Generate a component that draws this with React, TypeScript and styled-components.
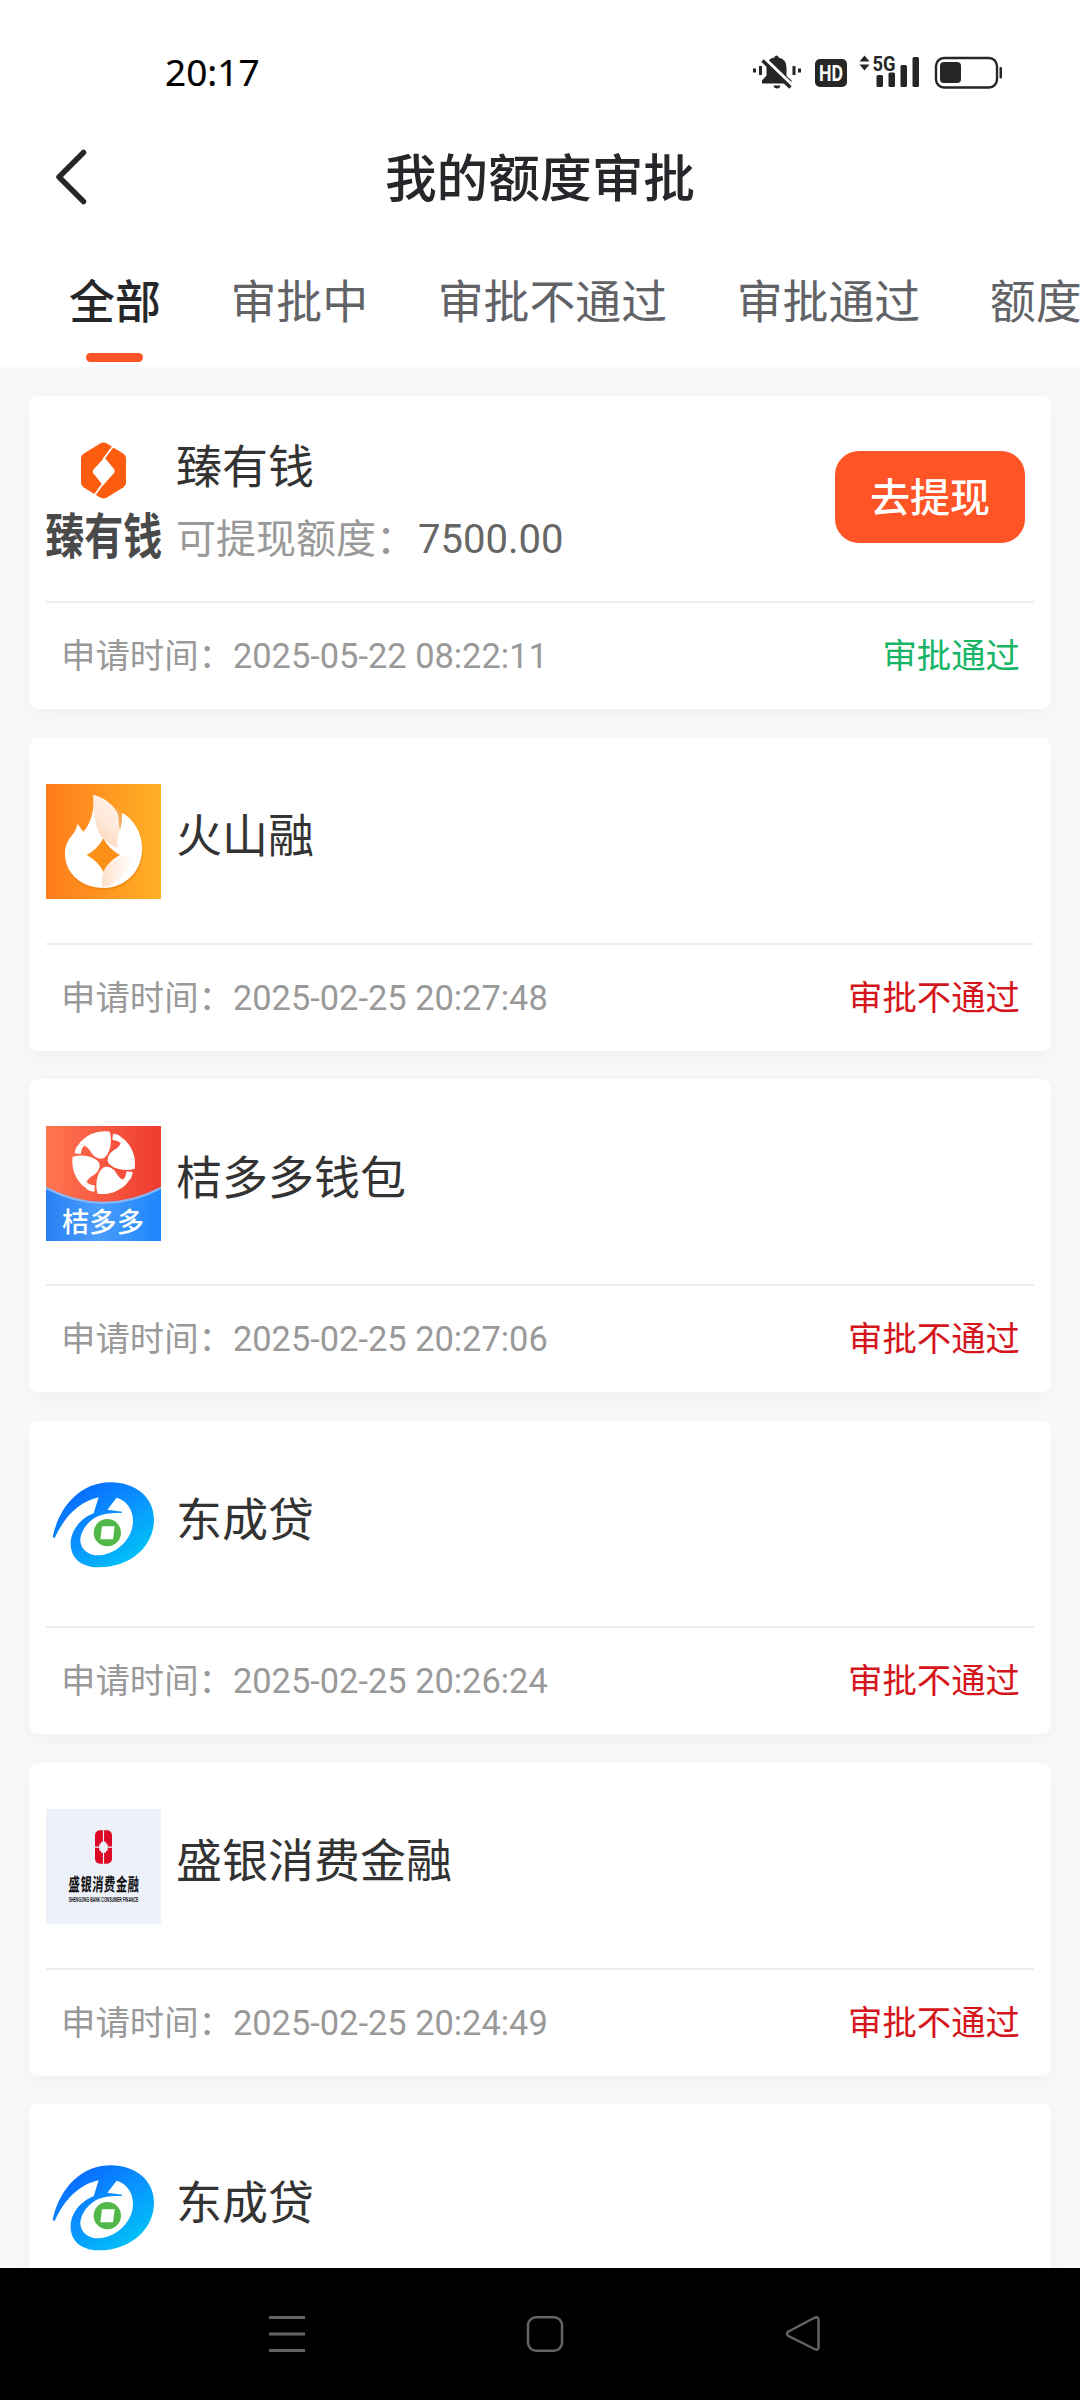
import React from 'react';
import styled, { createGlobalStyle } from 'styled-components';

const cjk = '"Noto Sans CJK SC", sans-serif';

const GlobalStyle = createGlobalStyle`
  * { box-sizing: border-box; }
  html, body { margin: 0; padding: 0; background: #f7f8fb; }
  button { font: inherit; border: 0; padding: 0; background: none; }
`;

const Screen = styled.div`
  display: flex;
  flex-direction: column;
  width: 1080px;
  height: 2400px;
  overflow: hidden;
  background: #f8f9fb;
  font-family: Roboto, ${cjk};
`;

const Header = styled.header`
  flex: none;
  display: flex;
  flex-direction: column;
  height: 367px;
  background: #fff;
`;

const StatusBar = styled.div`
  display: flex;
  justify-content: space-between;
  align-items: center;
  height: 144px;
  padding: 0 76px 0 165px;
`;

const SystemTray = styled.svg`
  display: block;
  overflow: visible;
`;

const Clock = styled.span`
  font: 400 37px/40px "Noto Sans", sans-serif;
  color: #000;
  -webkit-text-stroke: 0.2px #000;
`;

const TitleBar = styled.div`
  display: grid;
  grid-template-columns: 140px 1fr 140px;
  align-items: center;
  height: 66px;
`;

const BackButton = styled.button`
  display: flex;
  padding-left: 53px;
`;

const Title = styled.h1`
  margin: -4px 0 0;
  text-align: center;
  font: 500 51.7px/66px ${cjk};
  color: #26272a;
`;

const Tabs = styled.nav`
  display: flex;
  gap: 69.6px;
  padding-left: 69px;
  margin-top: 54px;
  overflow: hidden;
`;

const Tab = styled.button<{ $active?: boolean }>`
  flex: none;
  display: flex;
  flex-direction: column;
  align-items: center;
  gap: 21px;
  height: 103px;
  font: ${(p) => (p.$active ? 500 : 400)} 45.9px/68px ${cjk};
  color: ${(p) => (p.$active ? '#26272a' : '#626367')};
  &::after {
    content: '';
    width: 57px;
    height: 9px;
    border-radius: 5px;
    background: ${(p) => (p.$active ? '#fb5527' : 'transparent')};
  }
`;

const List = styled.main`
  flex: 1;
  min-height: 0;
  overflow: hidden;
  display: flex;
  flex-direction: column;
  gap: 28.7px;
  padding: 29px 29px 0;
`;

const Card = styled.article`
  flex: none;
  display: flex;
  flex-direction: column;
  height: 313px;
  padding: 0 17px;
  border-radius: 9px;
  background: #fff;
  box-shadow: 0 6px 22px rgba(0, 0, 0, 0.045);
`;

const Product = styled.div`
  display: flex;
  align-items: center;
  height: 207px;
  border-bottom: 2px solid #eeeeef;
`;

const Logo = styled.svg`
  flex: none;
  display: block;
  width: 115px;
  height: 115px;
  margin-top: 3px;
  overflow: visible;
`;

const Info = styled.div`
  flex: 1;
  display: flex;
  flex-direction: column;
  justify-content: center;
  padding-left: 15px;
`;

const Name = styled.div<{ $single?: boolean }>`
  font: 400 46px/70px ${cjk};
  color: #333;
  margin: ${(p) => (p.$single ? '0 0 16px' : '7px 0 0')};
`;

const Quota = styled.div`
  display: flex;
  gap: 2px;
  margin-top: 6px;
  font-size: 40px;
  line-height: 72px;
  color: #999;
`;

const Amount = styled.span`
  color: #666;
`;

const Withdraw = styled.button`
  width: 190px;
  height: 92px;
  margin-right: 9px;
  margin-bottom: 3px;
  padding-bottom: 4px;
  border-radius: 24px;
  background: #ff5426;
  color: #fff;
  font: 500 40px/84px ${cjk};
`;

const Footer = styled.div`
  display: flex;
  justify-content: space-between;
  align-items: center;
  height: 106px;
  padding: 0 14px 0 15px;
  font-size: 34.4px;
  line-height: 50px;
  color: #999;
`;

const Status = styled.span<{ $ok?: boolean }>`
  color: ${(p) => (p.$ok ? '#18b566' : '#d4161c')};
`;

const NavBar = styled.footer`
  flex: none;
  height: 132px;
  display: flex;
  justify-content: space-between;
  align-items: flex-start;
  padding: 46px 257px 0 267px;
  background: #000;
`;

const SystemIcons = () => (
  <SystemTray width="252" height="36" viewBox="752 54 252 36" fill="#262626">
    <path d="M774.5 57.5 q0-2 2-2 t2 2 q8 1.500 8 10.500 v8 l5 4.500 v3 h-29.500 v-3 l4.500-5 v-8 q0-9 8-10z" />
    <path d="M773.500 85.500h7q-.5 3-3.500 3t-3.500-3z" />
    <path d="M763.500 57.500l29 28" stroke="#fff" strokeWidth="3.500" />
    <path d="M762.500 60.500l28 27" stroke="#262626" strokeWidth="3.400" />
    <path d="M753 68.500h3v4h-3zM759 66h3v9h-3zM792.500 66h3v9h-3zM798 68.500h3v4h-3z" />
    <rect x="815" y="59" width="32" height="28" rx="5" />
    <text x="819" y="81" fontFamily="Roboto, sans-serif" fontWeight="700" fontSize="22.500" textLength="24" lengthAdjust="spacingAndGlyphs" fill="#fff">HD</text>
    <path d="M859.500 61.500l5-6 5 6zM859.500 64.500h10l-5 6z" />
    <text x="872.500" y="70.500" fontFamily="Roboto, sans-serif" fontWeight="700" fontSize="20" textLength="23" lengthAdjust="spacingAndGlyphs">5G</text>
    <rect x="876.500" y="75" width="6.500" height="12" rx="1.500" />
    <rect x="888.500" y="72.500" width="6.500" height="14.500" rx="1.500" />
    <rect x="900.500" y="65" width="6.500" height="22" rx="1.500" />
    <rect x="912.500" y="57" width="6.500" height="30" rx="1.500" />
    <rect x="936" y="58" width="61" height="29.500" rx="8" fill="none" stroke="#262626" strokeWidth="2.400" />
    <rect x="940" y="62" width="21" height="21" rx="4" />
    <rect x="999.500" y="67" width="2.500" height="11.500" rx="1" />
  </SystemTray>
);

const BackIcon = () => (
  <svg width="36" height="60" viewBox="53 147 36 60" fill="none" stroke="#26272a" strokeWidth="5.500" strokeLinecap="round" strokeLinejoin="round">
    <path d="M83.500 152.500L59 177L83.500 201.500" />
  </svg>
);

const ZhenLogo = () => (
  <Logo viewBox="0 0 115 115">
    <path d="M54.500 .3q3-1.600 6 0l17 10.500q2.500 1.600 2.500 4.500v24.400q0 2.900-2.500 4.500l-17 10.500q-3 1.600-6 0l-17-10.500q-2.500-1.600-2.500-4.500V15.300q0-2.900 2.500-4.500z" fill="#fb5c10" />
    <path d="M58.500 14.500l9.500 11.500q1.500 2 0 4l-11 12.500l-9.500-12q-1.500-2 0-4z" fill="#fff" />
    <path d="M67 3.500L57.500 16M57 40.500L48 53" stroke="#fff" strokeWidth="1.800" />
    <text transform="translate(-.8 110.500) scale(.94 1.180)" fontFamily={cjk} fontWeight="700" fontSize="41.500" fill="#4a4a4a">臻有钱</text>
  </Logo>
);

const FlameLogo = () => (
  <Logo viewBox="0 0 345 345">
    <defs>
      <linearGradient id="fbg" x1="0" x2="1"><stop offset="0" stopColor="#ff7c1a" /><stop offset="1" stopColor="#ffb026" /></linearGradient>
      <linearGradient id="fpe" x1="0.100" y1="1" x2=".6" y2="0"><stop offset="0" stopColor="#ffd3b5" /><stop offset=".6" stopColor="#ffe9db" /><stop offset="1" stopColor="#fff1e8" /></linearGradient>
      <linearGradient id="fbt" x1="0" x2="1"><stop offset="0" stopColor="#ffe0ca" /><stop offset="1" stopColor="#fff" /></linearGradient>
    </defs>
    <rect width="345" height="345" fill="url(#fbg)" />
    <path d="M60 220C65 285 115 318 172 318C240 318 285 270 290 210" fill="#e87a10" opacity=".5" />
    <path d="M142 32C148 80 130 125 112 143C108 140 104 130 94 119C90 155 57 160 57 210C57 270 110 312 172 312C238 312 288 262 288 195C288 145 260 105 228 87Q230 115 222 137C222 95 185 50 142 32Z" fill="#fff" />
    <path d="M142 32C190 45 232 85 222 137C215 155 222 175 225 196Q190 185 172 163C150 145 141 85 142 32Z" fill="url(#fpe)" />
    <path d="M228 87C262 105 288 145 288 195L222 213Q205 180 222 137Q229 112 228 87Z" fill="#fff" />
    <path d="M207 66C227 80 231 108 222 138C217 116 221 90 207 66Z" fill="#f3a65c" />
    <path d="M172 263C190 235 215 220 260 205C270 240 220 300 168 312Q166 285 172 263Z" fill="url(#fbt)" />
    <path d="M172 163Q188 195 222 213Q188 231 172 263Q156 231 122 213Q156 195 172 163Z" fill="#fb9019" />
  </Logo>
);

const JieLogo = () => (
  <Logo viewBox="0 0 345 345">
    <defs>
      <linearGradient id="jr" x1="0" x2="1"><stop offset="0" stopColor="#ff7650" /><stop offset="1" stopColor="#ee3b30" /></linearGradient>
      <linearGradient id="jb" x1="0" x2="1"><stop offset="0" stopColor="#2880f4" /><stop offset=".45" stopColor="#4a9dfb" /><stop offset="1" stopColor="#1c86fb" /></linearGradient>
    </defs>
    <rect width="345" height="345" fill="url(#jr)" />
    <path d="M0 182Q172 272 345 182V345H0Z" fill="#86b8fb" />
    <path d="M0 190Q172 278 345 190V345H0Z" fill="url(#jb)" />
    <g transform="translate(173 110)" fill="#fff">
      {[0, 90, 180, 270].map((a) => (
        <g key={a} transform={`rotate(${a})`}>
          <path d="M-74 -57C-50 -86 -15 -98 18 -93C28 -60 17 -26 2 -15C-10 -8 -26 -14 -36 -28C-44 -44 -56 -54 -74 -57Z" />
          <path d="M-87 -28C-86 -42 -80 -52 -72 -57L-56 -51C-66 -48 -66 -36 -69 -26Z" />
        </g>
      ))}
    </g>
    <text x="48" y="319" fontFamily={cjk} fontWeight="500" fontSize="82" fill="#fff" textLength="246">桔多多</text>
  </Logo>
);

const DongLogo = () => (
  <Logo viewBox="78 83 345 345">
    <defs>
      <linearGradient id="dg" x1=".15" y1=".1" x2=".85" y2=".9"><stop offset="0" stopColor="#0868ff" /><stop offset=".5" stopColor="#0a92ff" /><stop offset="1" stopColor="#00c4f6" /></linearGradient>
    </defs>
    <path fill="url(#dg)" fillRule="evenodd" d="M98 290C112 220 165 128 270 126C345 125 402 170 402 238C402 315 335 381 235 381C180 380 150 350 152 305C155 262 190 230 221 219L236 171C175 184 132 232 104 293ZM290 172L262 208L307 214L305 218C275 217 245 220 225 232C196 250 180 280 181 302C184 332 210 346 236 345C290 342 340 295 339 240C338 205 318 180 290 172Z" />
    <circle cx="262" cy="277" r="41" fill="#50b748" />
    <path d="M246 258H284L279 297H241Z" fill="#fff" />
  </Logo>
);

const ShengLogo = () => (
  <Logo viewBox="78 88 345 345">
    <rect x="78" y="88" width="345" height="345" fill="#edf1f9" />
    <rect x="225" y="152" width="51" height="100" rx="15" fill="#dc0a26" />
    <path d="M250.500 152V252M225 202.500H276" stroke="#edf1f9" strokeWidth="3.500" />
    <path d="M243 186h15v6h5v21h-5v6h-15v-6h-5v-21h5z" fill="#edf1f9" />
    <text transform="translate(145 334) scale(.8 1.300) skewX(-4)" fontFamily={cjk} fontWeight="700" fontSize="42" fill="#111" textLength="264">盛银消费金融</text>
    <text x="146" y="367" fontFamily="Liberation Sans, sans-serif" fontWeight="700" fontSize="20" fill="#111" textLength="209" lengthAdjust="spacingAndGlyphs">SHENGJING BANK CONSUMER FINANCE</text>
  </Logo>
);

interface Item {
  name: string;
  time: string;
  logo: React.ComponentType;
  amount?: string;
}

const items: Item[] = [
  { name: '臻有钱', time: '2025-05-22 08:22:11', logo: ZhenLogo, amount: '7500.00' },
  { name: '火山融', time: '2025-02-25 20:27:48', logo: FlameLogo },
  { name: '桔多多钱包', time: '2025-02-25 20:27:06', logo: JieLogo },
  { name: '东成贷', time: '2025-02-25 20:26:24', logo: DongLogo },
  { name: '盛银消费金融', time: '2025-02-25 20:24:49', logo: ShengLogo },
  { name: '东成贷', time: '', logo: DongLogo },
];

const tabs = ['全部', '审批中', '审批不通过', '审批通过', '额度'];

export default function App() {
  return (
    <>
      <GlobalStyle />
      <Screen>
        <Header>
          <StatusBar>
            <Clock>20:17</Clock>
            <SystemIcons />
          </StatusBar>
          <TitleBar>
            <BackButton aria-label="返回"><BackIcon /></BackButton>
            <Title>我的额度审批</Title>
          </TitleBar>
          <Tabs>
            {tabs.map((t, i) => <Tab key={t} $active={i === 0}>{t}</Tab>)}
          </Tabs>
        </Header>
        <List>
          {items.map(({ name, time, logo: Picture, amount }, i) => (
            <Card key={i}>
              <Product>
                <Picture />
                <Info>
                  <Name $single={!amount}>{name}</Name>
                  {amount && <Quota>可提现额度：<Amount>{amount}</Amount></Quota>}
                </Info>
                {amount && <Withdraw>去提现</Withdraw>}
              </Product>
              {time && (
                <Footer>
                  <span>申请时间：{time}</span>
                  <Status $ok={!!amount}>{amount ? '审批通过' : '审批不通过'}</Status>
                </Footer>
              )}
            </Card>
          ))}
        </List>
        <NavBar>
          <svg width="40" height="40" viewBox="267 2314 40 40" stroke="#646464" strokeWidth="2.800">
            <path d="M269 2317.500H305M269 2334H305M269 2350.500H305" />
          </svg>
          <svg width="40" height="40" viewBox="525 2314 40 40" fill="none" stroke="#646464" strokeWidth="2.500">
            <rect x="528" y="2317.300" width="34" height="33.500" rx="8" />
          </svg>
          <svg width="40" height="40" viewBox="783 2314 40 40" fill="none" stroke="#646464" strokeWidth="2.500">
            <path d="M788.500 2331.500L814 2318Q818.500 2316 818.500 2320V2347Q818.500 2351 814.500 2349L788.500 2336Q785.500 2333.800 788.500 2331.500Z" />
          </svg>
        </NavBar>
      </Screen>
    </>
  );
}
